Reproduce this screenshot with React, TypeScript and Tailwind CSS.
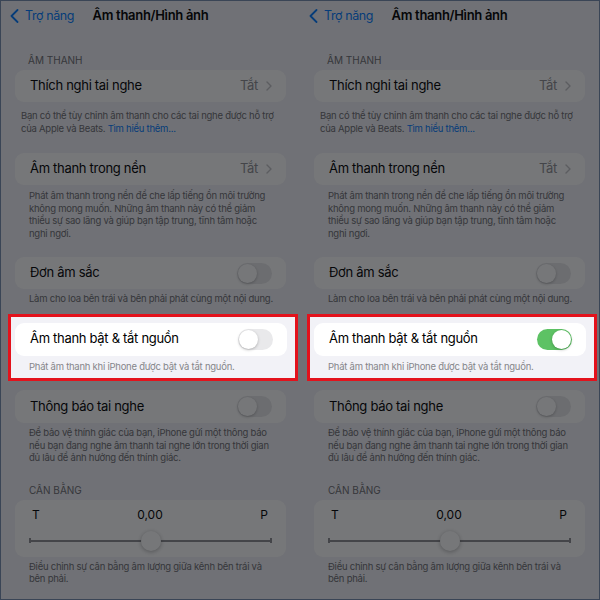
import React from 'react';

const font = { fontFamily: 'Inter, "Noto Sans", sans-serif' };

function Chevron() {
  return (
    <svg width="6" height="10" viewBox="0 0 6 10" fill="none">
      <path d="M1 1l4 4-4 4" stroke="#c4c4c7" strokeWidth="1.4" strokeLinecap="round" strokeLinejoin="round" />
    </svg>
  );
}

function Toggle({ on }: { on: boolean }) {
  return (
    <div
      className={`w-[35px] h-[21px] rounded-full p-[1px] flex ${on ? 'bg-[#5dc264] justify-end' : 'bg-[#e9e9eb] justify-start'}`}
    >
      <div className="w-[19px] h-[19px] rounded-full bg-white shadow-[0_1px_3px_rgba(0,0,0,0.25)]" />
    </div>
  );
}

function Row({ label, value, toggle, tall }: { label: string; value?: string; toggle?: boolean; tall?: boolean }) {
  return (
    <div
      className={`mx-[14px] ${tall ? 'h-[33px]' : 'h-[32px]'} rounded-[9px] bg-white pl-[15px] pr-[14px] flex items-center justify-between`}
    >
      <span className="text-[13px] tracking-[-0.3px] text-black">{label}</span>
      {value !== undefined ? (
        <div className="flex items-center gap-[8px]">
          <span className="text-[13px] tracking-[-0.3px] text-[#8e8e93]">{value}</span>
          <Chevron />
        </div>
      ) : (
        <Toggle on={!!toggle} />
      )}
    </div>
  );
}

function Footer({ lines, wide, className = '' }: { lines: React.ReactNode[]; wide?: boolean; className?: string }) {
  return (
    <div
      className={`${wide ? 'pl-[20px]' : 'pl-[28px]'} text-[9.5px] tracking-[-0.25px] leading-[12.5px] text-[#6d6d72] whitespace-nowrap ${className}`}
    >
      {lines.map((l, i) => (
        <div key={i}>{l}</div>
      ))}
    </div>
  );
}

function Panel({ on }: { on: boolean }) {
  return (
    <div className="relative w-[300px] h-full bg-[#f2f2f7] overflow-hidden" style={font}>
      {/* Nav bar */}
      <div className="h-[30px] grid grid-cols-[1fr_auto_1fr] items-center">
        <div className="flex items-center pl-[9px] gap-[6px] text-[#007aff]">
          <svg width="9" height="14" viewBox="0 0 9 14" fill="none">
            <path d="M7.5 1L1.5 7l6 6" stroke="#007aff" strokeWidth="1.8" strokeLinecap="round" strokeLinejoin="round" />
          </svg>
          <span className="text-[12.5px] tracking-[-0.4px]">Trợ năng</span>
        </div>
        <span className="text-[13px] tracking-[-0.3px] font-semibold text-black">Âm thanh/Hình ảnh</span>
        <div />
      </div>

      <div className="mt-[23px] pl-[27px] text-[10px] leading-[12px] text-[#6d6d72] uppercase">Âm thanh</div>
      <div className="mt-[4px]">
        <Row label="Thích nghi tai nghe" value="Tắt" />
      </div>
      <Footer
        wide
        className="mt-[8px]"
        lines={[
          'Bạn có thể tùy chỉnh âm thanh cho các tai nghe được hỗ trợ',
          <>
            của Apple và Beats. <span className="text-[#007aff]">Tìm hiểu thêm...</span>
          </>,
        ]}
      />

      <div className="mt-[18px]">
        <Row label="Âm thanh trong nền" value="Tắt" />
      </div>
      <Footer
        className="mt-[5px]"
        lines={[
          'Phát âm thanh trong nền để che lấp tiếng ồn môi trường',
          'không mong muốn. Những âm thanh này có thể giảm',
          'thiểu sự sao lãng và giúp bạn tập trung, tĩnh tâm hoặc',
          'nghỉ ngơi.',
        ]}
      />

      <div className="mt-[17px]">
        <Row label="Đơn âm sắc" toggle={false} />
      </div>
      <Footer className="mt-[4px]" lines={['Làm cho loa bên trái và bên phải phát cùng một nội dung.']} />

      {/* Highlighted */}
      <div className="relative z-10 mt-[8px] ml-[7px] w-[290px] border-[3px] border-[#e3121c] bg-[#f2f2f7] pt-[6px] pb-[5px]">
        <div className="-ml-[10px] -mr-[6px]">
          <Row label="Âm thanh bật & tắt nguồn" toggle={on} tall />
        </div>
        <div className="-ml-[10px]">
          <Footer className="mt-[5px] text-[#85858a]" lines={['Phát âm thanh khi iPhone được bật và tắt nguồn.']} />
        </div>
      </div>

      <div className="mt-[9px]">
        <Row label="Thông báo tai nghe" toggle={false} tall />
      </div>
      <Footer
        className="mt-[4px]"
        lines={[
          'Để bảo vệ thính giác của bạn, iPhone gửi một thông báo',
          'nếu bạn đang nghe âm thanh tai nghe lớn trong thời gian',
          'đủ lâu để ảnh hưởng đến thính giác.',
        ]}
      />

      <div className="mt-[19px] pl-[28px] text-[10px] leading-[12px] text-[#6d6d72] uppercase">Cân bằng</div>
      <div className="mt-[4px] mx-[14px] h-[57px] rounded-[9px] bg-white px-[14px] pt-[8px]">
        <div className="grid grid-cols-3 pl-[3px] pr-[4px] text-[12px] leading-[14px] text-black">
          <span>T</span>
          <span className="text-center">0,00</span>
          <span className="text-right">P</span>
        </div>
        <div className="relative mt-[9px] h-[20px] flex items-center">
          <div className="w-[2px] h-[5px] bg-[#8e8e93]" />
          <div className="flex-1 h-[2px] bg-[#8e8e93]" />
          <div className="w-[2px] h-[5px] bg-[#8e8e93]" />
          <div className="absolute left-1/2 top-0 -translate-x-1/2 w-[20px] h-[20px] rounded-full bg-white shadow-[0_1px_4px_rgba(0,0,0,0.3)]" />
        </div>
      </div>
      <Footer
        className="mt-[4px]"
        lines={['Điều chỉnh sự cân bằng âm lượng giữa kênh bên trái và', 'bên phải.']}
      />

      {/* Dim overlay */}
      <div className="absolute inset-0 bg-[#0a0c10]/[0.56] pointer-events-none" />
    </div>
  );
}

export default function App() {
  return (
    <div className="w-[600px] h-[600px] flex overflow-hidden border border-[#3a4556] bg-[#3a4556]">
      <Panel on={false} />
      <Panel on={true} />
    </div>
  );
}
